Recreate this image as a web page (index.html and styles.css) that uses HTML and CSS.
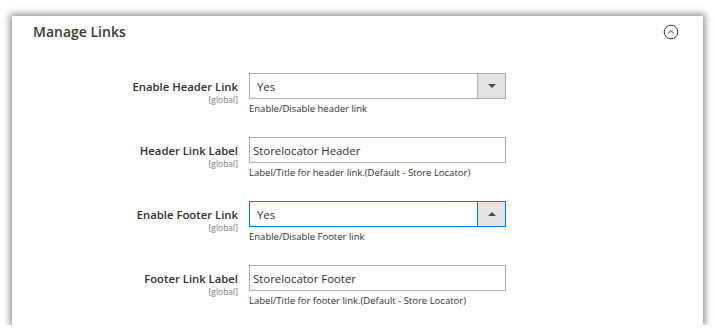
FILE: index.html
```html
<!DOCTYPE html>
<html>
<head>
<meta charset="utf-8">
<link rel="stylesheet" href="styles.css">
</head>
<body>
<section class="panel">
  <div class="panel-head">
    <h2 class="title">Manage Links</h2>
    <span class="toggle">
      <svg width="16" height="16" viewBox="0 0 16 16"><circle cx="8" cy="8" r="6.8" fill="none" stroke="#3a3a3a" stroke-width="1"/><path d="M5.2 9.2 L8 6.6 L10.8 9.2" fill="none" stroke="#3a3a3a" stroke-width="1"/></svg>
    </span>
  </div>
  <div class="form">
    <div class="row">
      <div class="label"><span class="name">Enable Header Link</span><span class="scope">[global]</span></div>
      <div class="control">
        <div class="select"><span class="val">Yes</span><span class="btn"><span class="arrow down"></span></span></div>
        <div class="note">Enable/Disable header link</div>
      </div>
    </div>
    <div class="row">
      <div class="label"><span class="name">Header Link Label</span><span class="scope">[global]</span></div>
      <div class="control">
        <div class="input"><span class="val">Storelocator Header</span></div>
        <div class="note">Label/Title for header link.(Default - Store Locator)</div>
      </div>
    </div>
    <div class="row">
      <div class="label"><span class="name">Enable Footer Link</span><span class="scope">[global]</span></div>
      <div class="control">
        <div class="select focus"><span class="val">Yes</span><span class="btn"><span class="arrow up"></span></span></div>
        <div class="note">Enable/Disable Footer link</div>
      </div>
    </div>
    <div class="row">
      <div class="label"><span class="name">Footer Link Label</span><span class="scope">[global]</span></div>
      <div class="control">
        <div class="input"><span class="val">Storelocator Footer</span></div>
        <div class="note">Label/Title for footer link.(Default - Store Locator)</div>
      </div>
    </div>
  </div>
</section>
</body>
</html>
```
FILE: styles.css
```css
html, body { margin: 0; padding: 0; background: #fff; }
body { font-family: "Open Sans", "Liberation Sans", sans-serif; color: #303030; }
.panel {
  margin: 16px 11px 0 12px;
  width: 691px;
  height: 309px;
  background: #fff;
  box-shadow: 0 0 7px 2px rgba(0,0,0,0.45);
  box-sizing: border-box;
}
.panel-head {
  display: flex;
  justify-content: space-between;
  align-items: center;
  padding: 6px 24px 0 21px;
  height: 20px;
}
.title { margin: 0; font-size: 14px; font-weight: 600; color: #41362f; line-height: 20px; }
.toggle { display: flex; width: 16px; height: 16px; }
.form { padding-top: 31px; display: flex; flex-direction: column; gap: 21px; }
.row { display: grid; grid-template-columns: 226px 257px; column-gap: 11px; }
.label { display: flex; flex-direction: column; align-items: flex-end; padding-top: 7px; }
.name { font-size: 11.3px; font-weight: 600; line-height: 14px; color: #303030; }
.scope { font-size: 8.5px; line-height: 11px; color: #808080; }
.control { display: flex; flex-direction: column; }
.select, .input {
  height: 26px; box-sizing: border-box; border: 1px solid #adadad; display: flex; align-items: center; background: #fff;
}
.select.focus { border-color: #007bdb; }
.val { flex: 1; font-size: 11.4px; color: #303030; }
.select .val { padding-left: 7px; }
.input .val { padding-left: 3px; }
.btn { width: 27px; height: 100%; background: #e3e3e3; border-left: 1px solid #adadad; display: flex; align-items: center; justify-content: center; }
.focus .btn { border-left-color: #007bdb; }
.arrow { width: 0; height: 0; border-left: 4px solid transparent; border-right: 4px solid transparent; }
.arrow.down { border-top: 4px solid #514943; }
.arrow.up { border-bottom: 4px solid #514943; }
.note { font-size: 9.5px; line-height: 14px; margin-top: 3px; color: #303030; }
```
